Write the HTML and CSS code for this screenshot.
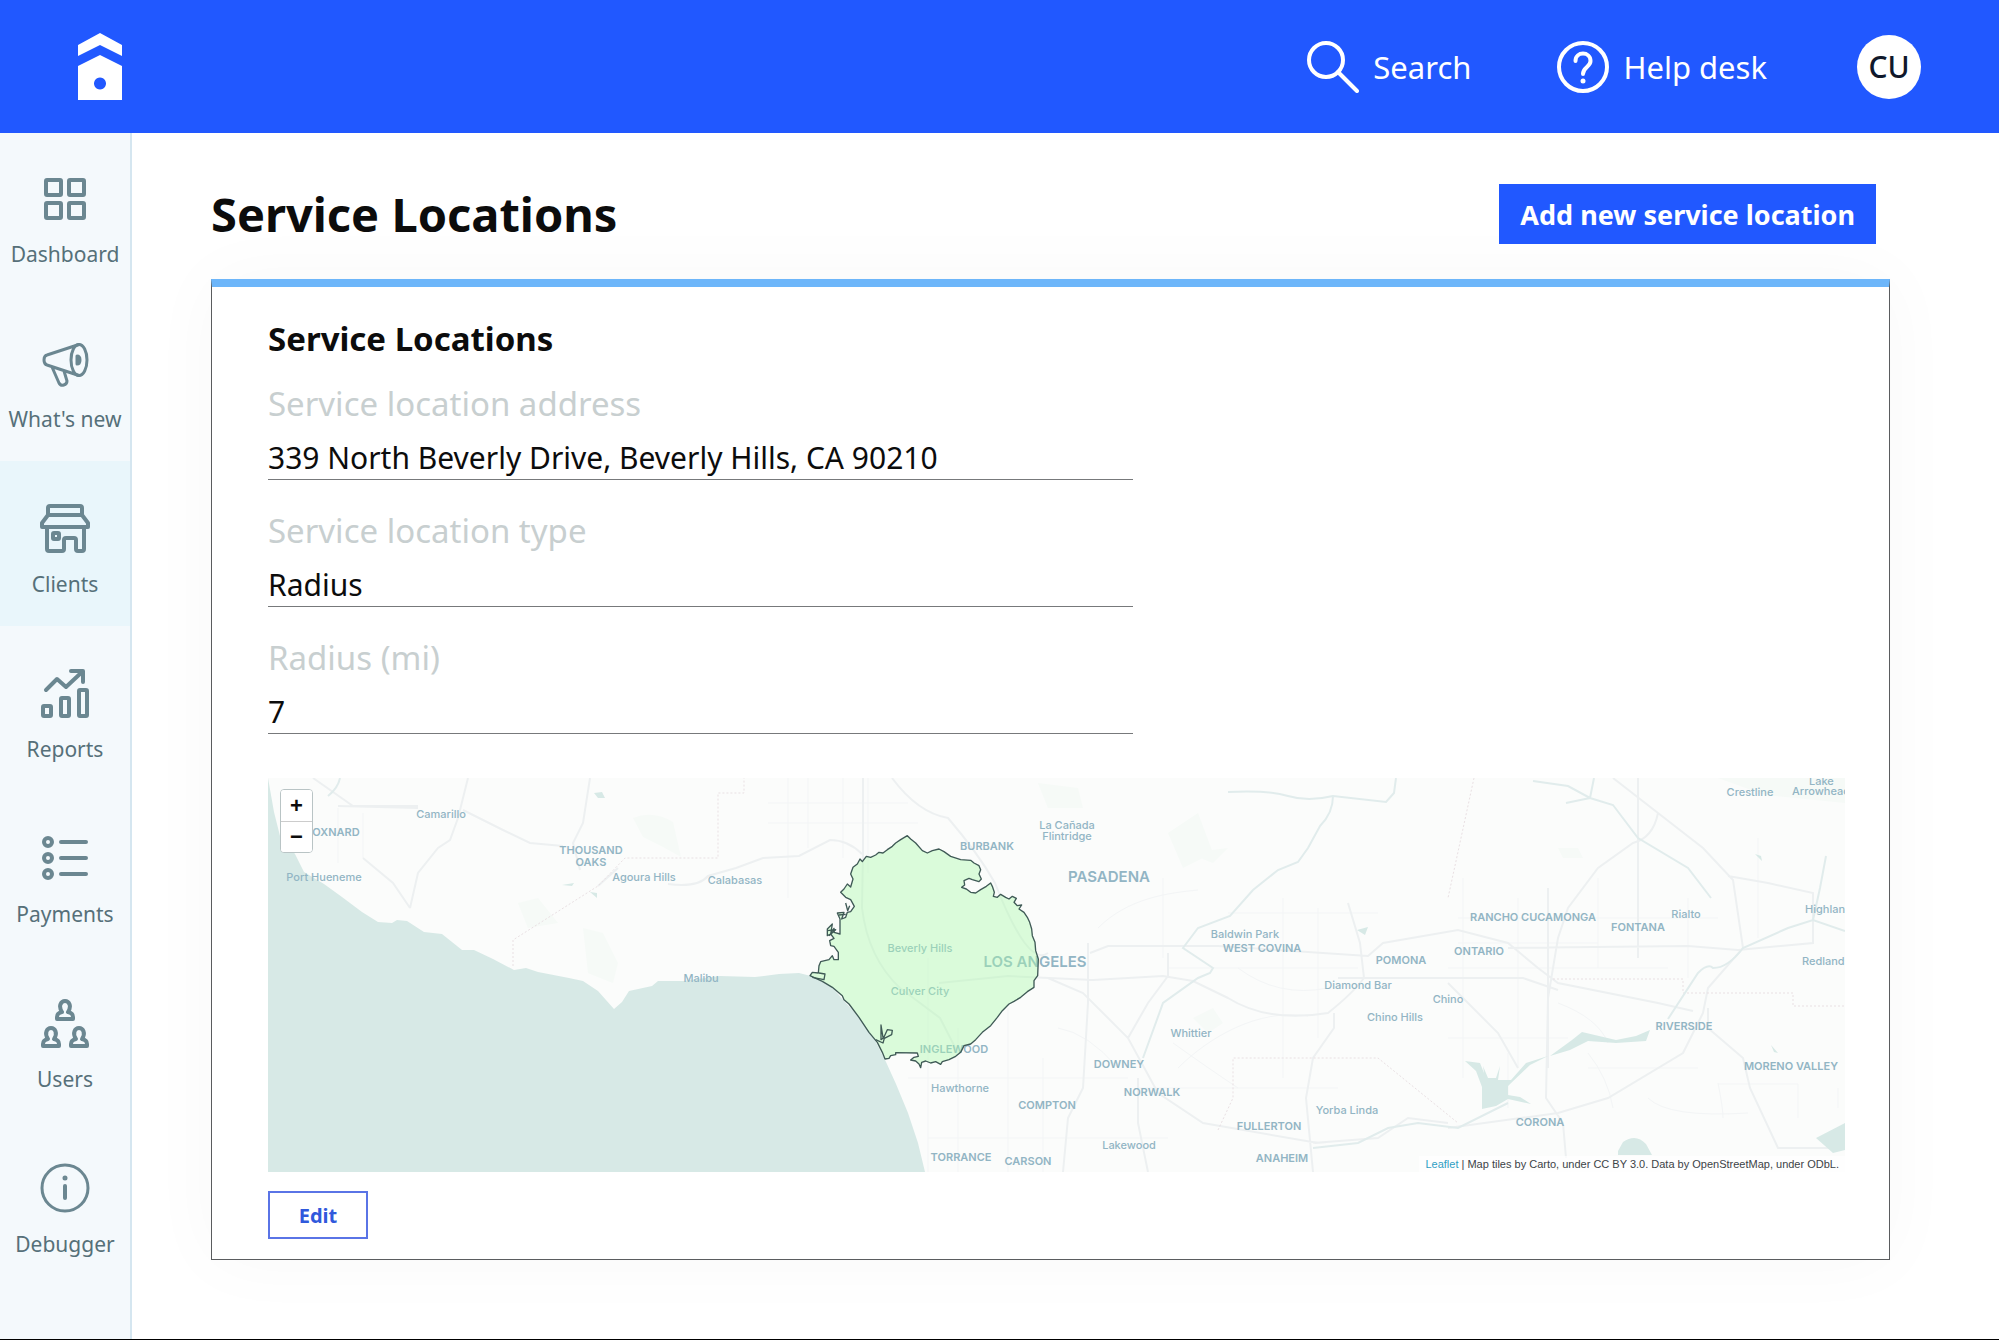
FILE: index.html
```html
<!DOCTYPE html>
<html lang="en">
<head>
<meta charset="utf-8">
<title>Service Locations</title>
<link rel="stylesheet" href="styles.css">
</head>
<body>
<header class="topbar">
  <a class="logo" href="#" aria-label="Home">
    <svg width="44" height="67" viewBox="0 0 44 67"><path d="M22 0 44 12V23L22 12 0 23V12Z"/><path fill-rule="evenodd" d="M22 22 44 33V67H0V33ZM22 44.500a6 6 0 1 0 .01 0Z"/></svg>
  </a>
  <nav class="tools">
    <a class="tool" href="#">
      <svg width="52" height="52" viewBox="0 0 52 52"><circle cx="19" cy="19" r="17"/><path d="M31 31 50 50"/></svg>
      Search
    </a>
    <a class="tool" href="#">
      <svg width="52" height="52" viewBox="0 0 52 52"><circle cx="26" cy="26" r="24"/><path d="M18.500 20c0-10 15-10 15 0 0 6-7.500 6-7.500 13"/><circle class="dot" cx="26" cy="40" r="2.500"/></svg>
      Help desk
    </a>
    <button class="avatar" type="button">CU</button>
  </nav>
</header>
<div class="shell">
  <nav class="sidebar">
    <a class="item" href="#"><svg viewBox="0 0 50 50"><rect x="6" y="7" width="15" height="15" rx="1"/><rect x="29" y="7" width="15" height="15" rx="1"/><rect x="6" y="30" width="15" height="15" rx="1"/><rect x="29" y="30" width="15" height="15" rx="1"/></svg>Dashboard</a>
    <a class="item" href="#"><svg class="thin" viewBox="0 0 50 50"><ellipse cx="39" cy="22" rx="8" ry="15.500"/><path d="M39 6.500 7 17C3 18 3 26 7 27L39 37.500M12 29 19 45C21 49 27 47 27 43L24 33"/><path class="solid" d="M37 18c4 0 4 8 0 8Z"/></svg>What's new</a>
    <a class="item active" href="#"><svg viewBox="0 0 50 50"><path d="M8 11V5Q8 3 10 3H40Q42 3 42 5V11M8 12H42L48 20V24H2V20ZM7 24V46Q7 48 9 48H22Q24 48 24 46V37Q24 35 26 35H34Q36 35 36 37V46Q36 48 38 48H42Q44 48 44 46V24"/><rect x="13" y="30" width="6" height="6" rx="1"/></svg>Clients</a>
    <a class="item" href="#"><svg viewBox="0 0 50 50"><rect x="3" y="38" width="8" height="10" rx="1"/><rect x="21" y="30" width="8" height="18" rx="1"/><rect x="39" y="22" width="8" height="26" rx="1"/><path d="M6 22 17 11 26 19 42 4M31 3H43V14"/></svg>Reports</a>
    <a class="item" href="#"><svg viewBox="0 0 50 50"><circle cx="8" cy="9" r="4"/><circle cx="8" cy="25" r="4"/><circle cx="8" cy="41" r="4"/><path d="M21 9H46M21 25H46M21 41H46"/></svg>Payments</a>
    <a class="item" href="#"><svg viewBox="0 0 50 50"><g id="person"><path d="M22 14C18 8 21 3 25 3S32 8 28 14Q33 15 33 19V21H17V19Q17 15 22 14Z"/></g><use href="#person" x="-14" y="27"/><use href="#person" x="14" y="27"/></svg>Users</a>
    <a class="item" href="#"><svg class="thin" viewBox="0 0 50 50"><circle cx="25" cy="25" r="23"/><path class="stem" d="M25 23V35"/><circle class="solid" cx="25" cy="15" r="1"/></svg>Debugger</a>
  </nav>
  <main class="main">
    <div class="titlebar">
      <h1>Service Locations</h1>
      <button class="primary" type="button">Add new service location</button>
    </div>
    <section class="card">
      <h2>Service Locations</h2>
      <div class="fields">
        <div class="field"><label for="address">Service location address</label><input id="address" value="339 North Beverly Drive, Beverly Hills, CA 90210" readonly></div>
        <div class="field"><label for="type">Service location type</label><input id="type" value="Radius" readonly></div>
        <div class="field"><label for="radius">Radius (mi)</label><input id="radius" value="7" readonly></div>
      </div>
      <div class="map">
        <svg class="tiles" viewBox="0 0 1577 394">
          <rect class="land" width="1577" height="394"/>
          <g class="parks">
            <path d="M365 40q20-8 40 4l8 35-18-10-20-10ZM250 125l20-5 20 25-30 5ZM315 150l20 5 15 30-5 20-25-10ZM770 5l40 5 5 20-35 0ZM900 55l30-20 15 40-30 15ZM920 75l40-5-15 15ZM925 240l20-10 10 15-15 10ZM1450 0h127v25l-80-8ZM1290 70l20 0 5 10-20 0Z"/>
          </g>
          <g class="roads minor">
            <path d="M520 0V120M540 0V70M575 0V80M600 0V95M500 25H640M500 45H650M660 180V394M690 250V394M740 230V394M775 280V394M895 100V180M1015 120V300M1050 130V260M1195 100V300M1250 120V290M1330 100V190M1420 120V200M1490 60V160M900 190H1090M960 135H1110M870 310H1070M640 300H860M660 360H900M1190 140H1450M1190 165H1330M1180 190H1400M1180 260H1300M70 30V85M95 35V80M1240 275V330M830 150C860 120 900 115 930 112M1320 290H1430M1450 306H1530V340M1570 310V330M970 190Q1010 220 1060 210M910 290C940 260 990 230 1040 238"/>
            <path d="M1320 275Q1340 300 1345 330M1290 225Q1330 240 1340 265M1450 305Q1455 330 1455 340M1380 320Q1400 340 1480 335M790 250Q820 255 850 290M905 265Q940 290 970 310"/>
          </g>
          <g class="roads">
            <path d="M45 0 85 28H150M195 32 235 52 262 65 295 68M150 30 70 28M95 80 125 105 142 130M200 0 190 40 182 62 170 70 150 95 142 130M322 0 315 45 305 65 312 92M330 108 350 90M400 106Q430 110 440 98L468 90 495 80 531 78 562 62Q580 62 594 76M595 0V75L594 130Q600 180 632 210L672 240 690 275M624 0Q650 35 680 40 710 75 727 105 760 190 780 175 790 150M531 75Q600 90 640 93L740 90 800 98 830 92 925 98 945 110 990 110 1015 122 1070 124 1175 122 1195 110 1450 108"/>
            <path d="M671 205 740 198 825 202 895 198 925 203 960 220Q1000 245 1060 235 1085 215 1096 200L1092 165 1080 125M822 175 840 168H950L1100 178 1115 165 1190 152 1240 165 1270 190 1290 205 1390 225 1425 233M780 200 815 215 860 260 890 315 935 345 1050 365M820 165V225L815 310 800 340 795 394M900 175V198L880 225 860 260M1070 200H1255L1290 212M1045 365 1110 360 1140 340 1180 345M1066 235V250L1045 280 1038 320 1045 394M1180 205 1230 255 1250 290M870 300V345L880 394M1345 0 1390 35 1435 70 1465 102 1475 170 1440 210 1435 235 1415 275 1340 320 1290 335 1180 350M1390 35Q1385 60 1365 65L1330 90 1300 130 1290 160 1280 220 1278 320 1295 345 1298 380M1240 170 1420 168 1470 172 1545 165V115L1500 105 1460 98M1440 230V250L1475 280 1482 310 1510 370H1577M1370 0V180M1280 110V290"/>
          </g>
          <path class="boundary" d="M245 188V162L330 108 357 80H450V15H476V0M950 352 965 320V280H1110L1190 345M1206 0 1180 120M1285 201H1415V215H1525V228H1577"/>
          <path class="river" d="M60 18Q70 10 72 0M960 14Q1000 12 1020 18T1065 18L1118 24 1126 15 1128 0M1065 18Q1065 35 1052 48L1040 70 1030 84 1010 92 985 112 962 138 930 150 915 170 945 190 942 195 930 200 895 225 875 280M1265 3 1300 8 1322 20 1345 27 1370 60 1420 90 1443 120M1322 20 1326 0M1298 25 1322 20M1045 370 1090 365 1120 350 1150 345 1190 350 1240 325M1400 241 1430 195Q1440 185 1445 190 1460 190 1475 170L1520 150 1545 142 1577 153M1545 142 1552 110 1558 78"/>
          <g class="water">
            <path d="M0 0V394H657L650 365 640 335 628 306 618 284 608 264 591 239 576 223 564 209 543 198 531 195 511 196 487 199 452 198 415 203 390 203 384 208 361 213 354 224 346 231 330 213 315 203 301 200 270 194 258 190 246 192 225 181 206 172 194 172 174 156 156 154 139 143 129 142 124 145 110 144 94 134 74 119 56 106 36 94 27 76 12 58 6 34Z"/>
            <path d="M1197 283 1212 285 1216 295 1215 288 1220 300H1228L1232 288 1230 302H1243L1258 285 1280 278 1262 287 1240 308V317L1252 319 1263 326 1240 321 1228 328 1214 331V309L1208 293ZM1282 278 1304 262 1314 254 1348 262 1368 258 1382 252 1378 263 1348 265 1320 263 1302 272ZM1350 373 1355 364Q1368 355 1378 366L1384 377H1350ZM1548 360 1577 345V372L1565 375ZM326 15 334 14 337 20 330 20ZM294 107 306 105 304 108ZM322 114 329 115 329 120ZM1487 76 1493 78 1494 83ZM1089 152 1100 149 1097 157ZM1503 267 1510 275 1506 274Z"/>
          </g>
          <g class="labels town" text-anchor="middle">
            <text x="173" y="40">Camarillo</text><text x="56" y="103">Port Hueneme</text><text x="376" y="103">Agoura Hills</text><text x="467" y="106">Calabasas</text><text x="433" y="204">Malibu</text>
            <text x="799" y="51">La Cañada</text><text x="799" y="62">Flintridge</text><text x="652" y="174">Beverly Hills</text><text x="652" y="217">Culver City</text><text x="692" y="314">Hawthorne</text>
            <text x="977" y="160">Baldwin Park</text><text x="1090" y="211">Diamond Bar</text><text x="1127" y="243">Chino Hills</text><text x="1180" y="225">Chino</text><text x="923" y="259">Whittier</text><text x="1079" y="336">Yorba Linda</text><text x="861" y="371">Lakewood</text>
            <text x="1482" y="18">Crestline</text><text x="1418" y="140">Rialto</text>
          </g>
          <g class="labels town">
            <text x="1541" y="7">Lake</text><text x="1524" y="17">Arrowhead</text><text x="1537" y="135">Highland</text><text x="1534" y="187">Redlands</text>
          </g>
          <g class="labels city" text-anchor="middle">
            <text x="68" y="58">OXNARD</text><text x="323" y="76">THOUSAND</text><text x="323" y="88">OAKS</text><text x="719" y="72">BURBANK</text><text x="686" y="275">INGLEWOOD</text>
            <text x="994" y="174">WEST COVINA</text><text x="1133" y="186">POMONA</text><text x="851" y="290">DOWNEY</text><text x="884" y="318">NORWALK</text><text x="779" y="331">COMPTON</text><text x="693" y="383">TORRANCE</text><text x="760" y="387">CARSON</text><text x="1001" y="352">FULLERTON</text><text x="1014" y="384">ANAHEIM</text>
            <text x="1265" y="143">RANCHO CUCAMONGA</text><text x="1370" y="153">FONTANA</text><text x="1211" y="177">ONTARIO</text><text x="1416" y="252">RIVERSIDE</text><text x="1523" y="292">MORENO VALLEY</text><text x="1272" y="348">CORONA</text>
          </g>
          <g class="labels metro" text-anchor="middle"><text x="841" y="104">PASADENA</text><text x="767" y="189">LOS ANGELES</text></g>
          <g class="zone" transform="translate(511 -9) scale(.33333)">
            <path d="M385 200 395 210 410 222 430 245 445 252 460 245 480 240 495 248 515 262 545 272 575 274 585 282 600 290 605 302 600 315 607 330 600 338 580 332 570 328 555 335 557 348 548 355 562 360 575 370 590 372 605 362 622 352 635 342 640 352 646 370 643 382 655 385 665 376 680 385 690 390 700 382 712 388 705 400 715 410 728 408 720 420 735 430 745 445 752 460 758 480 760 500 768 520 770 545 778 570 776 620 765 635 765 655 745 668 725 685 705 697 690 705 670 725 655 745 635 770 610 790 590 812 575 825 555 830 545 850 530 862 510 872 490 878 485 886 470 878 455 882 440 876 428 880 425 896 420 885 410 876 395 873 405 865 418 862 415 852 350 851 350 857 335 860 330 868 318 870 310 850 295 820 270 790 240 745 210 705 195 692 190 680 160 655 130 637 93 620 100 610 118 612 120 590 125 578 150 572 160 560 165 572 178 572 178 550 165 532 155 530 152 515 165 508 155 495 145 500 145 480 160 465 155 495 165 478 165 490 183 495 183 450 175 432 195 430 188 450 200 445 205 430 215 428 226 412 215 392 200 385 185 370 195 360 205 345 215 354 222 330 215 315 222 295 235 285 243 270 250 278 262 262 275 265 290 258 300 250 312 252 325 242 340 232 350 222 365 212Z"/>
            <path class="loops" d="M290 812 312 822 316 808 338 797 340 784 325 782 314 806 306 812 306 768 312 806M145 485 170 482 150 500M180 438 200 436M200 402 206 425 212 410M100 625 135 632 138 615 120 612"/>
          </g>
        </svg>
        <div class="zoom"><button type="button" aria-label="Zoom in">+</button><button type="button" aria-label="Zoom out">−</button></div>
        <p class="credit"><a href="#">Leaflet</a> | Map tiles by Carto, under CC BY 3.0. Data by OpenStreetMap, under ODbL.</p>
      </div>
      <button class="edit" type="button">Edit</button>
    </section>
  </main>
</div>
</body>
</html>
```
FILE: styles.css
```css
* { box-sizing: border-box; }
body {
  margin: 0;
  min-height: 100vh;
  display: flex;
  flex-direction: column;
  border-bottom: 1px solid #000;
  background: #fff;
  color: #0c0c0c;
  font-family: "Noto Sans", "Open Sans", sans-serif;
}
button, input { font-family: inherit; color: inherit; margin: 0; }
a { color: inherit; text-decoration: none; }
h1, h2, p { margin: 0; }
svg { display: block; }

.topbar {
  position: relative;
  z-index: 1;
  height: 133px;
  padding: 0 78px;
  display: flex;
  align-items: center;
  justify-content: space-between;
  background: #2158ff;
  color: #fff;
}
.logo { fill: #fff; }
.tools { display: flex; align-items: center; gap: 86px; }
.tool { display: flex; align-items: center; gap: 14px; font-size: 31px; line-height: 44px; }
.tool svg { fill: none; stroke: #fff; stroke-width: 4; stroke-linecap: round; }
.tool .dot { fill: #fff; stroke: none; }
.avatar {
  width: 64px;
  height: 64px;
  margin-left: 4px;
  padding: 0;
  border: 0;
  border-radius: 50%;
  background: #fff;
  color: #10182b;
  font-size: 30px;
  font-weight: 500;
}

.shell { flex: 1; display: flex; }
.sidebar {
  width: 132px;
  flex: none;
  margin-top: -2px;
  border-right: 2px solid #d5e6f0;
  background: #f4f9fc;
}
.item {
  height: 165px;
  padding-top: 42px;
  display: flex;
  flex-direction: column;
  align-items: center;
  gap: 17px;
  color: #567079;
  font-size: 21px;
  line-height: 28px;
  white-space: nowrap;
}
.item.active { background: #e9f6fb; }
.item svg {
  width: 50px;
  height: 50px;
  fill: none;
  stroke: #6b8791;
  stroke-width: 4;
  stroke-linecap: round;
  stroke-linejoin: round;
}
.item .thin { stroke-width: 3; }
.item .stem { stroke-width: 4; }
.item .solid { fill: #6b8791; }

.main { flex: 1; min-width: 0; padding: 48px 109px 48px 79px; }
.titlebar { display: flex; align-items: center; justify-content: space-between; padding-right: 14px; }
h1 { font-size: 47px; line-height: 66px; }
.primary {
  height: 60px;
  padding: 0 21px;
  border: 0;
  background: #2158ff;
  color: #fff;
  font-size: 27px;
  font-weight: 700;
}
.card {
  margin-top: 32px;
  padding: 29px 44px 20px 56px;
  border: 1px solid #5a5c5e;
  border-top: 8px solid #6db6fa;
  box-shadow: 0 0 70px rgba(0, 0, 0, .03);
}
h2 { font-size: 33px; line-height: 46px; }
.fields { margin-top: 19px; max-width: 865px; display: flex; flex-direction: column; gap: 28px; }
.field { display: flex; flex-direction: column; gap: 8px; }
.field label { color: #c8cfd0; font-size: 33px; line-height: 46px; }
.field input {
  width: 100%;
  height: 45px;
  padding: 0;
  border: 0;
  border-bottom: 1px solid #77797b;
  background: none;
  font-size: 30px;
  line-height: 44px;
  outline: 0;
}

.map { position: relative; margin-top: 44px; overflow: hidden; }
.tiles { width: 100%; height: auto; }
.land { fill: #fbfcfb; }
.parks { fill: #f6faf7; }
.roads { fill: none; stroke: #edf0f1; stroke-width: 2; }
.minor { stroke: #f3f5f6; stroke-width: 1; }
.boundary { fill: none; stroke: #e9e0e3; stroke-dasharray: 2 2; }
.river { fill: none; stroke: #e1ecec; stroke-width: 2; }
.water { fill: #d7e9e6; }
.labels { fill: #92b5c4; font-family: Inter, "Open Sans", sans-serif; }
.town { font-size: 11px; font-weight: 500; }
.city { font-size: 11px; font-weight: 600; }
.metro { font-size: 15px; font-weight: 600; }
.zone path { fill: rgba(170, 250, 170, .4); stroke: #3f5a56; stroke-width: 4; stroke-linejoin: round; }
.zone .loops { fill: none; }
.zoom {
  position: absolute;
  top: 11px;
  left: 12px;
  width: 33px;
  border: 1px solid #b9c4c5;
  border-radius: 4px;
  background: #fff;
  overflow: hidden;
}
.zoom button {
  display: block;
  width: 100%;
  height: 31px;
  padding: 0;
  border: 0;
  background: #fff;
  font: 700 22px/30px "Liberation Sans", sans-serif;
}
.zoom button + button { border-top: 1px solid #ccc; }
.credit {
  position: absolute;
  right: 0;
  bottom: 0;
  padding: 0 6px;
  background: rgba(255, 255, 255, .7);
  color: #3c4347;
  font: 11px/16px "Liberation Sans", sans-serif;
}
.credit a { color: #2f9fc4; }
.edit {
  display: block;
  width: 100px;
  height: 48px;
  margin-top: 19px;
  padding: 0;
  border: 2px solid #5a74e6;
  background: #fff;
  color: #3059dc;
  font-size: 20px;
  font-weight: 700;
}
```
